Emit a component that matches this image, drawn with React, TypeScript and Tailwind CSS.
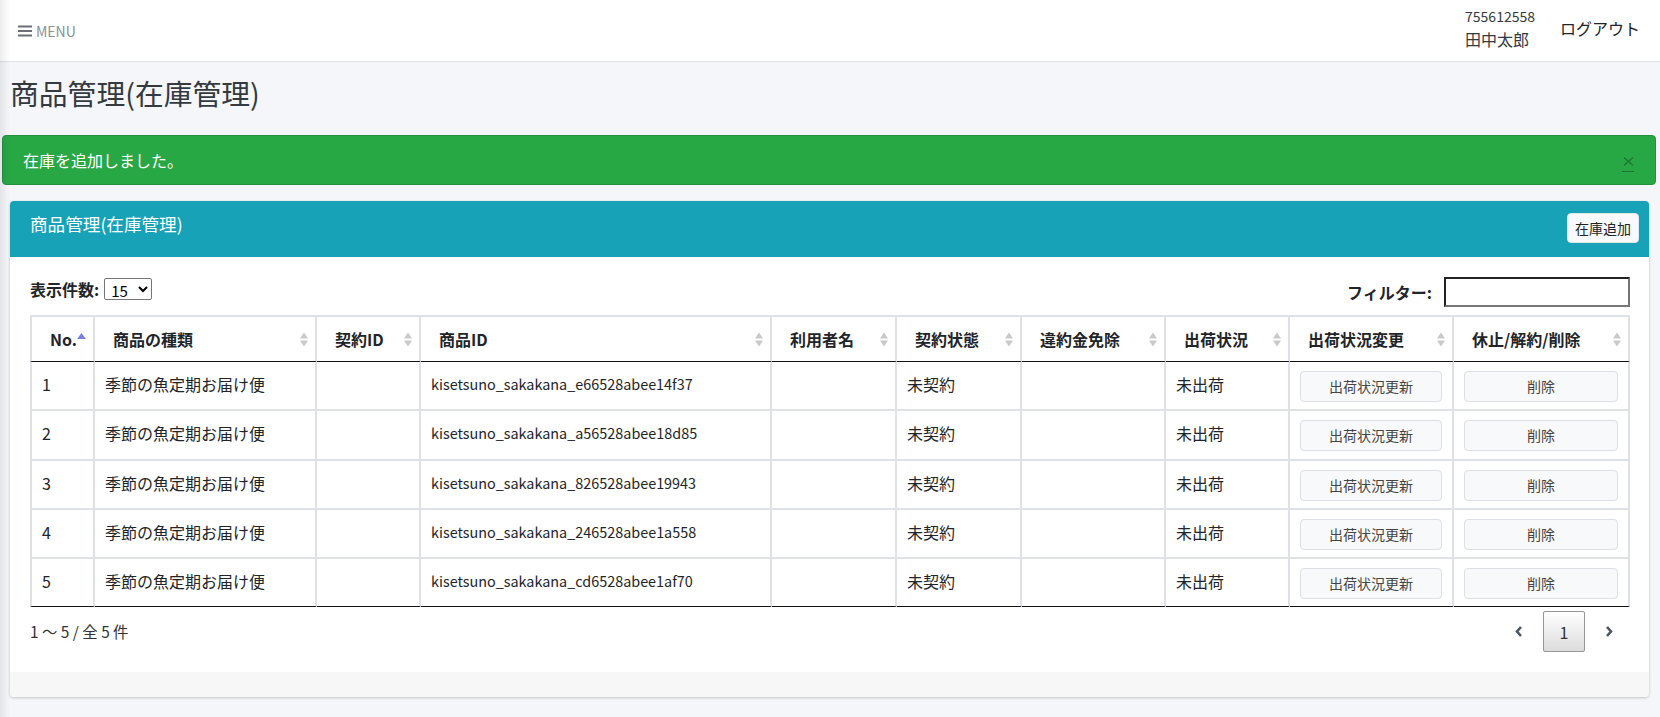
import React from "react";

type Col = { label: string; w: string; active?: boolean };

const cols: Col[] = [
  { label: "No.", w: "w-[65px]", active: true },
  { label: "商品の種類", w: "w-[222px]" },
  { label: "契約ID", w: "w-[104px]" },
  { label: "商品ID", w: "w-[351px]" },
  { label: "利用者名", w: "w-[125px]" },
  { label: "契約状態", w: "w-[125px]" },
  { label: "違約金免除", w: "w-[144px]" },
  { label: "出荷状況", w: "w-[124px]" },
  { label: "出荷状況変更", w: "w-[164px]" },
  { label: "休止/解約/削除", w: "w-[176px]" },
];

const ids = [
  "kisetsuno_sakakana_e66528abee14f37",
  "kisetsuno_sakakana_a56528abee18d85",
  "kisetsuno_sakakana_826528abee19943",
  "kisetsuno_sakakana_246528abee1a558",
  "kisetsuno_sakakana_cd6528abee1af70",
];

function SortIcon({ active }: { active?: boolean }) {
  if (active) {
    return (
      <svg width="9" height="15" viewBox="0 0 9 15" className="shrink-0">
        <path d="M4.5 1 L9 7 L0 7 Z" fill="#7d7fdc" />
      </svg>
    );
  }
  return (
    <svg width="8" height="15" viewBox="0 0 8 15" className="shrink-0">
      <path d="M4 0.5 L8 6.5 L0 6.5 Z" fill="#c9c9c9" />
      <path d="M0 8.5 L8 8.5 L4 14.5 Z" fill="#c9c9c9" />
    </svg>
  );
}

function Chevron({ dir }: { dir: "l" | "r" }) {
  return (
    <svg width="8" height="11" viewBox="0 0 8 11">
      <polyline
        points={dir === "l" ? "6,1 2,5.5 6,10" : "2,1 6,5.5 2,10"}
        fill="none"
        stroke="#4b5563"
        strokeWidth="2.6"
      />
    </svg>
  );
}

export default function App() {
  return (
    <div className="relative min-h-screen bg-[#f4f6f9] font-['Noto_Sans_CJK_JP','Noto_Sans',sans-serif] text-[16px] text-[#212529]">
      <div className="pointer-events-none fixed inset-y-0 left-0 z-10 w-[10px] bg-linear-to-r from-black/[0.07] to-transparent" />

      {/* top bar */}
      <header className="flex h-[62px] items-center justify-between border-b border-[#dee2e6] bg-white pl-[18px] pr-[20px]">
        <div className="flex items-center gap-[4px] text-[#8a8f96]">
          <svg width="14" height="12" viewBox="0 0 14 12">
            <rect x="0" y="0.5" width="14" height="2" fill="#6b6f75" />
            <rect x="0" y="5" width="14" height="2" fill="#6b6f75" />
            <rect x="0" y="9.5" width="14" height="2" fill="#6b6f75" />
          </svg>
          <span className="text-[14px] leading-none">MENU</span>
        </div>
        <div className="flex items-center gap-[25px]">
          <div className="mb-[5px] flex flex-col text-[14px] leading-[23px] text-[#343a40]">
            <span>755612558</span>
            <span className="text-[16px]">田中太郎</span>
          </div>
          <span className="mb-[6px] text-[16px] text-[#212529]">ログアウト</span>
        </div>
      </header>

      <main className="pt-[12px] pb-[19px]">
        <h1 className="px-[10px] text-[28.8px] leading-[38px] font-normal text-[#343a40]">
          商品管理(在庫管理)
        </h1>

        <div className="mt-[23px] ml-[2px] mr-[4px] flex h-[50px] items-center rounded-[4px] border border-[#23923d] bg-[#28a745] pl-[20px] text-white">
          <span className="leading-6">在庫を追加しました。</span>
          <button className="mt-[8px] mr-[21px] ml-auto flex w-[12px] shrink-0 flex-col items-center gap-[5px]">
            <svg width="11" height="9" viewBox="0 0 11 9">
              <path d="M1 0.5 L10 8.5 M10 0.5 L1 8.5" stroke="#1e7434" strokeWidth="1.3" />
            </svg>
            <span className="block h-[1px] w-[12px] bg-[#1e7434]" />
          </button>
        </div>

        <section className="mt-[16px] ml-[10px] mr-[11px] rounded-[4px] bg-white shadow-[0_0_1px_rgba(0,0,0,0.125),0_1px_3px_rgba(0,0,0,0.2)]">
          <div className="flex items-start justify-between rounded-t-[4px] bg-[#17a2b8] pt-[12px] pb-[14px] pl-[20px] pr-[10px]">
            <h2 className="text-[17.6px] leading-[22px] font-normal text-white">商品管理(在庫管理)</h2>
            <button className="h-[30px] rounded-[4px] border border-[#e2e6ea] bg-[#f8f9fa] px-[7px] text-[14px] text-[#212529]">
              在庫追加
            </button>
          </div>

          <div className="pt-[20px] pb-[20px] pl-[20px] pr-[19px]">
            <div className="flex items-start justify-between">
              <label className="mt-[1px] flex h-[22px] items-center font-bold">
                表示件数:
                <select
                  defaultValue="15"
                  className="ml-[5px] h-[22px] w-[48px] rounded-[2px] border border-[#767676] bg-white pl-[2px] text-[15px] font-normal text-black"
                >
                  <option>15</option>
                  <option>30</option>
                  <option>50</option>
                </select>
              </label>
              <label className="flex h-[30px] items-center font-bold">
                フィルター:
                <input className="ml-[12px] h-[30px] w-[186px] border-2 border-t-[#222] border-l-[#222] border-r-[#767676] border-b-[#767676] bg-white px-1 font-normal outline-none" />
              </label>
            </div>

            <table className="mt-[8px] w-full table-fixed border-separate border-spacing-0">
              <thead>
                <tr>
                  {cols.map((c, i) => (
                    <th
                      key={c.label}
                      className={`${c.w} border-t-2 border-r-2 border-b border-t-[#dee2e6] border-r-[#dee2e6] border-b-[#111] ${
                        i === 0 ? "border-l-2 border-l-[#dee2e6]" : ""
                      } py-[10px] pl-[18px] pr-[7px] text-left font-bold leading-6`}
                    >
                      <div className="flex items-center justify-between">
                        <span className="whitespace-nowrap">{c.label}</span>
                        <SortIcon active={c.active} />
                      </div>
                    </th>
                  ))}
                </tr>
              </thead>
              <tbody>
                {ids.map((id, r) => {
                  const last = r === ids.length - 1;
                  const b = `border-r-2 border-r-[#dee2e6] ${
                    last ? "border-b border-b-[#111]" : "border-b-2 border-b-[#dee2e6]"
                  }`;
                  const td = `${b} px-[10px] pt-[10px] pb-[13.3px] align-top leading-6`;
                  const btnTd = `${b} px-[10px] pt-[9px] align-top`;
                  return (
                    <tr key={id}>
                      <td className={`${td} border-l-2 border-l-[#dee2e6]`}>{r + 1}</td>
                      <td className={td}>季節の魚定期お届け便</td>
                      <td className={td}></td>
                      <td className={`${td} text-[14.4px]`}>{id}</td>
                      <td className={td}></td>
                      <td className={td}>未契約</td>
                      <td className={td}></td>
                      <td className={td}>未出荷</td>
                      <td className={btnTd}>
                        <button className="h-[31px] w-full rounded-[4px] border border-[#dcdfe3] bg-[#f8f9fa] text-[14px] text-[#444]">
                          出荷状況更新
                        </button>
                      </td>
                      <td className={btnTd}>
                        <button className="h-[31px] w-full rounded-[4px] border border-[#dcdfe3] bg-[#f8f9fa] text-[14px] text-[#444]">
                          削除
                        </button>
                      </td>
                    </tr>
                  );
                })}
              </tbody>
            </table>

            <div className="mt-[4px] flex h-[41px] items-center justify-between">
              <span className="text-[15.4px] text-[#333]">1 〜 5 / 全 5 件</span>
              <div className="flex items-center gap-[3px]">
                <button className="flex h-[41px] w-[42px] items-center justify-center">
                  <Chevron dir="l" />
                </button>
                <button className="h-[41px] w-[42px] rounded-[2px] border border-[#979797] bg-linear-to-b from-white to-[#dcdcdc] text-[#333]">
                  1
                </button>
                <button className="flex h-[41px] w-[42px] items-center justify-center">
                  <Chevron dir="r" />
                </button>
              </div>
            </div>
          </div>

          <div className="h-[25px] rounded-b-[4px] bg-[#f7f7f7]" />
        </section>
      </main>
    </div>
  );
}
